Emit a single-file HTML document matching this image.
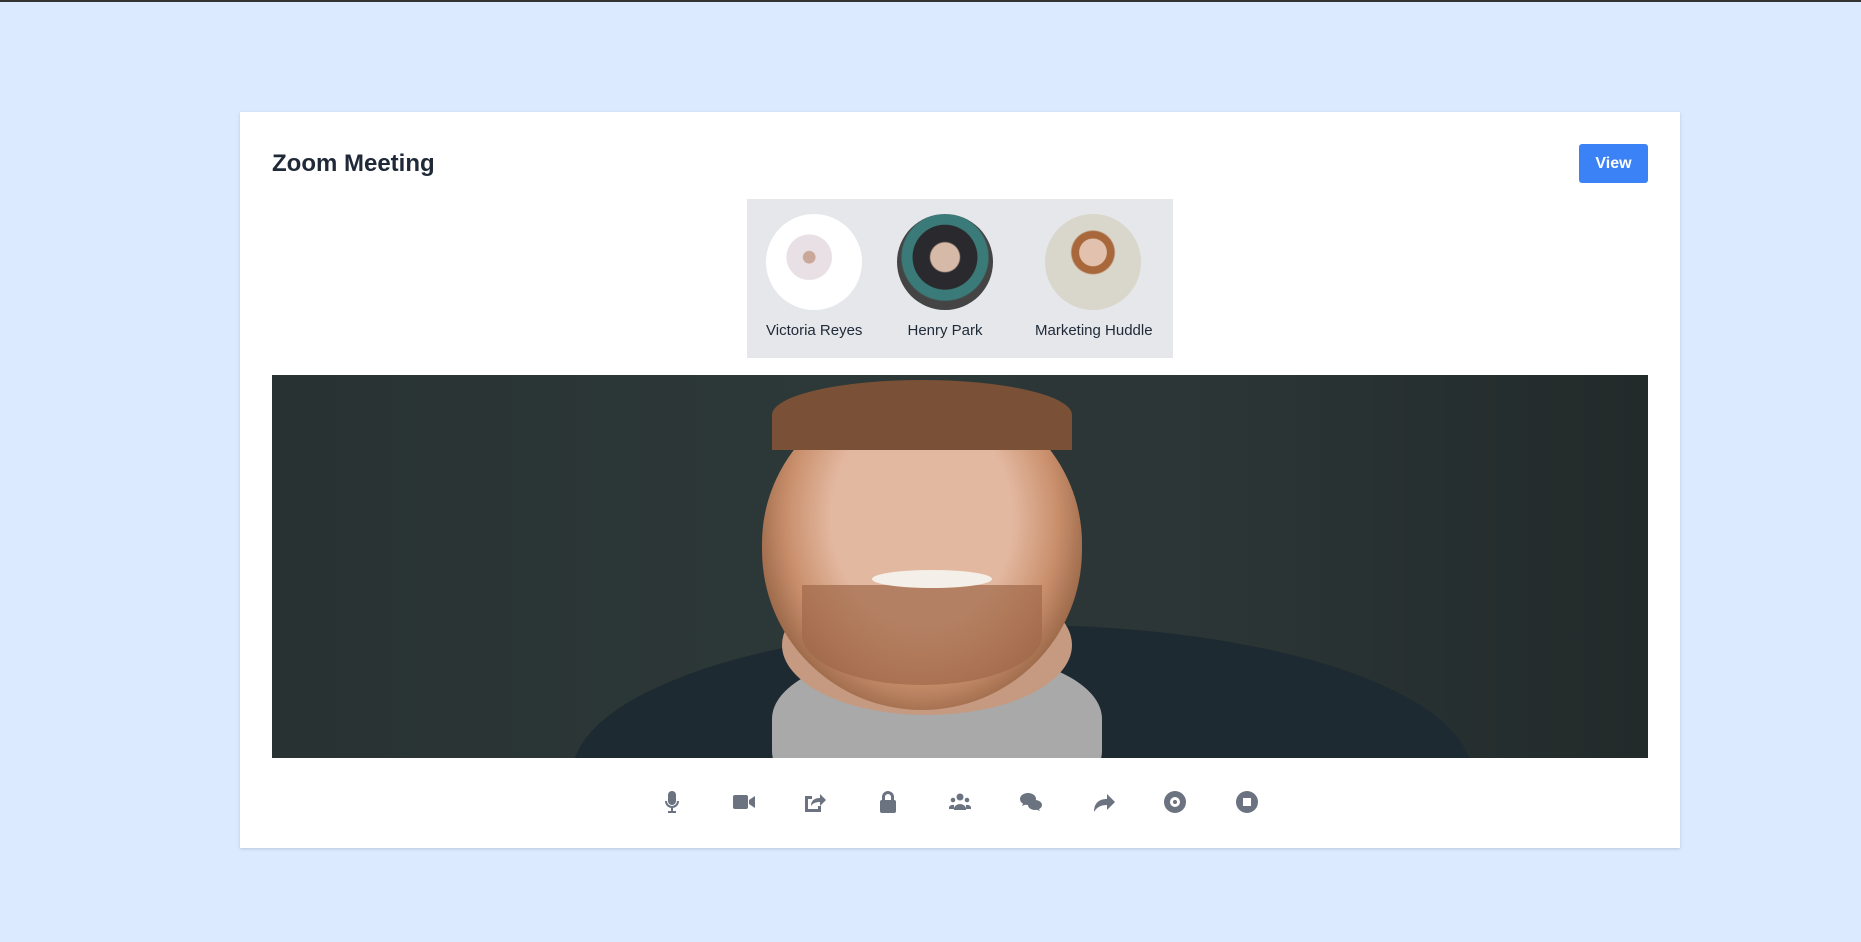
<!DOCTYPE html>
<html><head><style>
*{margin:0;padding:0;box-sizing:border-box}
body{width:1861px;height:942px;background:#dbeafe;font-family:"Liberation Sans",sans-serif;position:relative;overflow:hidden;border-top:2px solid #333}
.card{position:absolute;left:240px;top:110px;width:1440px;height:736px;background:#fff;box-shadow:0 1px 3px rgba(0,0,0,.15)}
h1{position:absolute;left:32px;top:38px;font-size:24px;font-weight:bold;color:#1f2937}
.btn{position:absolute;left:1339px;top:32px;width:69px;height:39px;background:#3b82f6;border-radius:3px;color:#fff;font-weight:bold;font-size:16px;text-align:center;line-height:39px}
.parts{position:absolute;left:507px;top:87px;width:426px;height:159px;background:#e5e7eb}
.p{position:absolute;top:15px;text-align:center;font-size:15px;color:#1f2937;white-space:nowrap}
.av{width:96px;height:96px;border-radius:50%;margin:0 auto 12px}
.video{position:absolute;left:32px;top:263px;width:1376px;height:383px;overflow:hidden;background:linear-gradient(90deg,#283232,#2d3838 40%,#2b3535 70%,#222a2a)}
.icons{position:absolute;top:678px;left:0;width:100%}
.icons svg{position:absolute;top:0;width:24px;height:24px;fill:#6b7280}
</style></head><body>
<div class="card">
<h1>Zoom Meeting</h1>
<div class="btn">View</div>
<div class="parts">
 <div class="p" style="left:19px;width:96px"><div class="av" style="background:radial-gradient(circle at 45% 45%,#c9a89a 0 8%,#e8e0e4 9% 30%,#fff 31%)"></div>Victoria Reyes</div>
 <div class="p" style="left:150px;width:96px"><div class="av" style="background:radial-gradient(circle at 50% 45%,#d7b9a8 0 20%,#2a2a2e 22% 45%,#3a7a78 46% 60%,#444 62%)"></div>Henry Park</div>
 <div class="p" style="left:288px;width:116px"><div class="av" style="width:96px;background:radial-gradient(circle at 50% 40%,#e2c2ae 0 18%,#a8683c 19% 28%,#d9d6cb 30%)"></div>Marketing Huddle</div>
</div>
<div class="video">
 <div style="position:absolute;left:300px;top:250px;width:900px;height:300px;border-radius:50%;background:#1e2a32"></div>
 <div style="position:absolute;left:500px;top:280px;width:330px;height:160px;border-radius:40%;background:#a9a9a9"></div>
 <div style="position:absolute;left:510px;top:200px;width:290px;height:140px;border-radius:50%;background:#c59a80"></div>
 <div style="position:absolute;left:490px;top:15px;width:320px;height:320px;border-radius:48% 48% 50% 50%;background:radial-gradient(ellipse at 50% 40%,#e3b8a0 0 40%,#c98f6c 60%,#8a5a3c 80%)"></div>
 <div style="position:absolute;left:530px;top:210px;width:240px;height:100px;border-radius:0 0 50% 50%;background:#a06848;opacity:.7"></div>
 <div style="position:absolute;left:600px;top:195px;width:120px;height:18px;border-radius:50%;background:#f4efe8"></div>
 <div style="position:absolute;left:500px;top:5px;width:300px;height:70px;border-radius:50% 50% 0 0;background:#7a5036"></div>
</div>
<div class="icons">
 <svg style="left:420px" viewBox="0 0 24 24"><rect x="8" y="1" width="8" height="14" rx="4"/><path d="M5 11a7 7 0 0 0 14 0h-2a5 5 0 0 1-10 0zM11 18h2v3h3v2H8v-2h3z"/></svg>
 <svg style="left:492px" viewBox="0 0 24 24"><rect x="1" y="5" width="15" height="14" rx="2"/><path d="M17 10l6-4v12l-6-4z"/></svg>
 <svg style="left:563px" viewBox="0 0 24 24"><path d="M2 6h7v3H5v10h10v-3h3v6H2z"/><path d="M8 16c0-6 4-8 9-8V4l6 6-6 6v-4c-4 0-7 1-9 4z"/></svg>
 <svg style="left:636px" viewBox="0 0 24 24"><path d="M6 10V7a6 6 0 0 1 12 0v3h-3V7a3 3 0 0 0-6 0v3z"/><rect x="4" y="10" width="16" height="13" rx="2"/></svg>
 <svg style="left:708px" viewBox="0 0 24 24"><circle cx="12" cy="7" r="3.5"/><circle cx="5" cy="10" r="2.3"/><circle cx="19" cy="10" r="2.3"/><path d="M6 19a6 5 0 0 1 12 0v1H6zM1 17a4 3 0 0 1 5-2v4H1zM23 17a4 3 0 0 0-5-2v4h5z"/></svg>
 <svg style="left:779px" viewBox="0 0 24 24"><ellipse cx="9" cy="9" rx="8" ry="6"/><path d="M3 16l2-4 3 2z"/><ellipse cx="16" cy="15" rx="7" ry="5"/><path d="M21 21l-2-4-3 2z"/></svg>
 <svg style="left:852px" viewBox="0 0 24 24"><path d="M2 22c0-9 5-13 13-13V4l8 8-8 8v-5c-6 0-10 2-13 7z"/></svg>
 <svg style="left:923px" viewBox="0 0 24 24"><path fill-rule="evenodd" d="M12 1a11 11 0 1 1 0 22 11 11 0 0 1 0-22zm0 6a5 5 0 1 0 0 10 5 5 0 0 0 0-10zm0 3a2 2 0 1 1 0 4 2 2 0 0 1 0-4z"/></svg>
 <svg style="left:995px" viewBox="0 0 24 24"><path fill-rule="evenodd" d="M12 1a11 11 0 1 1 0 22 11 11 0 0 1 0-22zM8 8v8h8V8z"/></svg>
</div>
</div>
</body></html>
